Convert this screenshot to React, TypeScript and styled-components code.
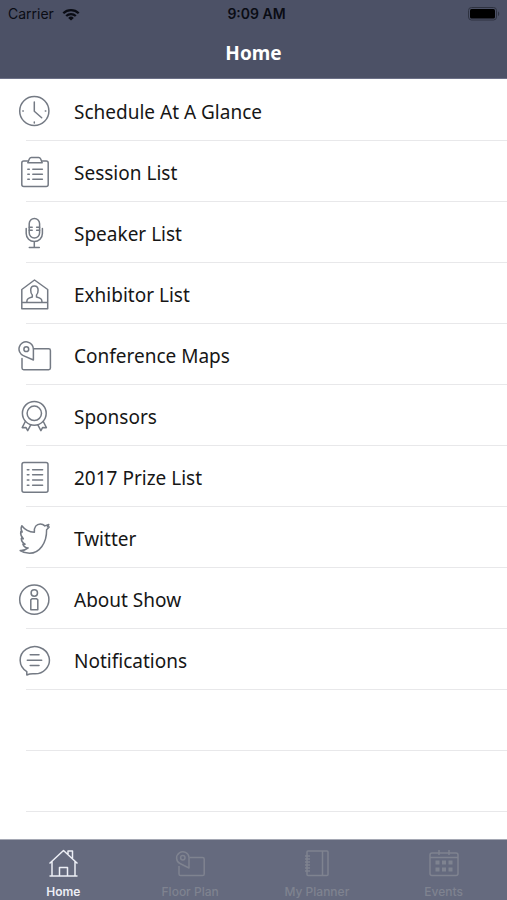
import React from "react";
import styled, { createGlobalStyle } from "styled-components";

const GlobalStyle = createGlobalStyle`
  * { box-sizing: border-box; }
  body { margin: 0; background: #fff; }
  button { border: 0; background: none; padding: 0; margin: 0; cursor: pointer; }
`;

const Screen = styled.div`
  display: flex;
  flex-direction: column;
  min-height: 100vh;
  background: #fff;
  font-family: "Noto Sans", "Open Sans", sans-serif;
`;

const TopBar = styled.header`
  background: #4c5166;
  border-bottom: 1px solid #6c7087;
`;

const StatusBar = styled.div`
  display: grid;
  grid-template-columns: 1fr auto 1fr;
  align-items: center;
  height: 28px;
  padding: 0 7px 0 8px;
  color: #0a0c14;
  font: 400 14px/28px Inter, sans-serif;
`;

const Carrier = styled.div`
  display: flex;
  align-items: center;
  gap: 8px;
`;

const Clock = styled.time`
  font-weight: 600;
  padding-left: 5px;
`;

const Battery = styled.svg`
  justify-self: end;
  width: 33px;
  height: 16px;
`;

const Title = styled.h1`
  margin: 0;
  height: 50px;
  color: #fff;
  text-align: center;
  font-size: 19px;
  line-height: 50px;
  font-weight: 700;
`;

const Menu = styled.ul`
  flex: 1;
  margin: 0;
  padding: 1px 0 0 26px;
  list-style: none;
`;

const MenuItem = styled.li`
  height: 61px;
  border-bottom: 1px solid #e8e8ea;
`;

const MenuButton = styled.button`
  display: flex;
  align-items: center;
  gap: 22px;
  width: calc(100% + 8px);
  height: 60px;
  margin-left: -8px;
  padding-top: 2px;
  color: #161616;
  text-align: left;
  font: 400 19px/28px "Noto Sans", "Open Sans", sans-serif;
`;

const MenuLabel = styled.span`
  padding-top: 1px;
`;

const LineIcon = styled.svg`
  flex: none;
  width: 34px;
  height: 32px;
  fill: none;
  stroke: #747a84;
  stroke-width: 1.5;
  stroke-linecap: round;
  stroke-linejoin: round;
`;

const TabBar = styled.nav`
  display: grid;
  grid-template-columns: repeat(4, 1fr);
  height: 61px;
  background: #656a7e;
  border-top: 1px solid #a5a8b4;
`;

const Tab = styled.button<{ $active: boolean }>`
  display: flex;
  flex-direction: column;
  align-items: center;
  padding-top: 8px;
  gap: 6px;
  color: ${(p) => (p.$active ? "#eceef5" : "#7f8390")};
  font: ${(p) => (p.$active ? 600 : 500)} 12px/16px Inter, sans-serif;
`;

const TabIcon = styled.svg`
  width: 32px;
  height: 30px;
  fill: none;
  stroke: currentColor;
  stroke-width: 1.5;
  stroke-linejoin: round;
`;

const items: { label: string; icon: React.ReactNode }[] = [
  {
    label: "Schedule At A Glance",
    icon: (
      <>
        <circle cx="16.3" cy="16" r="14.6" />
        <path d="M16.3 7v9.3l7.4 6.4M16.3 27v1M4.8 16h.5M27.300 16h.5" />
      </>
    ),
  },
  {
    label: "Session List",
    icon: (
      <>
        <path d="M9.500 5H5.800a2 2 0 0 0-2 2v21.500a2 2 0 0 0 2 2h22.400a2 2 0 0 0 2-2V7a2 2 0 0 0-2-2h-3.700" />
        <path d="M9.800 6.800h14.400L22.700 3c-.5-1.100-1.100-1.600-2-1.600h-7.400c-.9 0-1.500.5-2 1.600z" />
        <path d="M9.800 13.300h1.500M14.800 13.300h9.600M9.800 18.300h1.500M14.800 18.300h9.600M9.800 23.300h1.500M14.800 23.300h9.600" />
      </>
    ),
  },
  {
    label: "Speaker List",
    icon: (
      <>
        <rect x="11.200" y="1.500" width="10.400" height="19.500" rx="5.200" />
        <path d="M8.200 11.500v5a8.100 8.100 0 0 0 16.200 0v-5M16.300 25v5.600M11.300 30.600h10M11.200 10.200h3M18.600 10.200h3M11.200 13.200h3M18.600 13.200h3" />
      </>
    ),
  },
  {
    label: "Exhibitor List",
    icon: (
      <>
        <path d="M3.800 30.700V11.500L16.500 2l13.200 9.500v19.200zM3.800 24.400h25.900" />
        <path d="M8.800 24.200c0-3.400 1.400-4 5.500-5.200v-2c-1.200-1-1.600-2.400-1.600-5 0-5.500 7.400-5.500 7.400 0 0 2.600-.4 4-1.600 5v2c4.100 1.200 5.500 1.800 5.500 5.200" />
      </>
    ),
  },
  {
    label: "Conference Maps",
    icon: (
      <>
        <path d="M4 19.500V29a1.700 1.700 0 0 0 1.700 1.700h25A1.700 1.700 0 0 0 32.400 29V11.400a1.700 1.700 0 0 0-1.700-1.700H15.600" />
        <path d="M15.400 21 5.300 16.600A7.200 7.200 0 1 1 15.400 10.200z" />
        <circle cx="8.300" cy="10.200" r="2.400" />
      </>
    ),
  },
  {
    label: "Sponsors",
    icon: (
      <>
        <circle cx="16.300" cy="13.300" r="11.900" />
        <circle cx="16.300" cy="13.300" r="7.200" />
        <path d="m7.300 21.500-3.100 6.200 3.700-.3 1.800 3.300 3.200-6M25.300 21.500l3.100 6.200-3.700-.3-1.800 3.300-3.200-6" />
      </>
    ),
  },
  {
    label: "2017 Prize List",
    icon: (
      <>
        <rect x="4" y="1.600" width="26" height="29.600" rx="2" />
        <path d="M9.300 8.700h1.600M14.600 8.700h10M9.300 13.800h1.600M14.600 13.800h10M9.300 19h1.600M14.600 19h10M9.300 24.200h1.600M14.600 24.200h10" />
      </>
    ),
  },
  {
    label: "Twitter",
    icon: (
      <path d="M3.800 3.800C7 8 11.500 10 16.400 10.300 15.700 5 18.600 1.900 22.300 1.900c2 0 3.500.9 4.600 2l3.900-1.400-1.400 2.300 1.800.2-2.600 2.700C28.800 21 21.500 31.200 11.500 31.200c-3.700 0-6.700-1-9.300-2.700 3 .2 5.800-.8 8-2.600-2.800-.1-4.600-1.600-5.300-3.700h2.200C4.600 21 3.400 18.800 3.300 16.400l2 .4C3.500 14.800 2.300 12 2.800 9.600l1.400.4C2.900 8 2.900 5.700 3.800 3.800z" />
    ),
  },
  {
    label: "About Show",
    icon: (
      <>
        <circle cx="16.300" cy="16.600" r="14.600" />
        <circle cx="16.300" cy="10" r="3.200" />
        <path d="M14 15.700h4.600l1.200 1.200v9.800h-7v-9.800z" />
      </>
    ),
  },
  {
    label: "Notifications",
    icon: (
      <>
        <path d="M8.800 31v-3.400A14.600 13.600 0 1 1 15 29.700c-2.300 0-4.200.3-6.200 1.300z" />
        <path d="M12.200 10.700h8.800M9.300 16.200h14.400M12.200 21.600h8.800" />
      </>
    ),
  },
];

const tabs: { label: string; icon: React.ReactNode }[] = [
  {
    label: "Home",
    icon: (
      <>
        <path d="m2.500 15.500 14-13 14 13M5 13.500V28M28 13.500V28M2.500 28h28M12.500 28v-8.500h8V28M21 6V3h4.500v8" />
      </>
    ),
  },
  {
    label: "Floor Plan",
    icon: (
      <>
        <path d="M5 18v8a1.600 1.600 0 0 0 1.600 1.600h22A1.600 1.600 0 0 0 30.200 26V11a1.600 1.600 0 0 0-1.600-1.600H15.500" />
        <path d="M15 20 6 15.500A6.200 6.200 0 1 1 15 9.500z" />
        <circle cx="8.800" cy="9.700" r="2.200" />
      </>
    ),
  },
  {
    label: "My Planner",
    icon: (
      <>
        <rect x="6" y="3" width="21" height="24.500" rx="1" />
        <path d="M21.500 3v24.500M4 8h5M4 11h5M4 14h5M4 17h5M4 20h5M4 23h5" />
      </>
    ),
  },
  {
    label: "Events",
    icon: (
      <>
        <rect x="2" y="5" width="28" height="22.500" rx="2" />
        <path d="M2 9.500h28M11 2v5M21 2v5" />
        <path
          strokeWidth="4"
          d="M7.500 14.500h4M14 14.500h4M20.500 14.500h4M7.500 21.500h4M14 21.500h4M20.500 21.500h4"
        />
      </>
    ),
  },
];

export default function App() {
  return (
    <Screen>
      <GlobalStyle />
      <TopBar>
        <StatusBar>
          <Carrier>
            Carrier
            <svg width="18" height="13" viewBox="0 0 18 13" aria-hidden="true">
              <path
                d="M1.300 5.200a11 11 0 0 1 15.400 0M4.200 8a7 7 0 0 1 9.600 0"
                fill="none"
                stroke="#0a0c14"
                strokeWidth="2.300"
              />
              <path d="M9 12.600 6.200 9.900a4 4 0 0 1 5.600 0z" fill="#0a0c14" />
            </svg>
          </Carrier>
          <Clock>9:09 AM</Clock>
          <Battery viewBox="0 0 33 16" aria-hidden="true">
            <rect x="1.500" y="1.500" width="28" height="12.500" rx="3" fill="none" stroke="#2e3240" />
            <rect x="3" y="3" width="25" height="9.500" rx="1.500" fill="#000" />
            <path d="M31 5.500c1.600.6 1.600 4 0 4.600z" fill="#2e3240" />
          </Battery>
        </StatusBar>
        <Title>Home</Title>
      </TopBar>
      <Menu>
        {items.map((item) => (
          <MenuItem key={item.label}>
            <MenuButton type="button">
              <LineIcon viewBox="0 0 34 32" aria-hidden="true">
                {item.icon}
              </LineIcon>
              <MenuLabel>{item.label}</MenuLabel>
            </MenuButton>
          </MenuItem>
        ))}
        <MenuItem aria-hidden="true" />
        <MenuItem aria-hidden="true" />
      </Menu>
      <TabBar>
        {tabs.map((tab, i) => (
          <Tab key={tab.label} type="button" $active={i === 0}>
            <TabIcon viewBox="0 0 32 30" aria-hidden="true">
              {tab.icon}
            </TabIcon>
            {tab.label}
          </Tab>
        ))}
      </TabBar>
    </Screen>
  );
}
